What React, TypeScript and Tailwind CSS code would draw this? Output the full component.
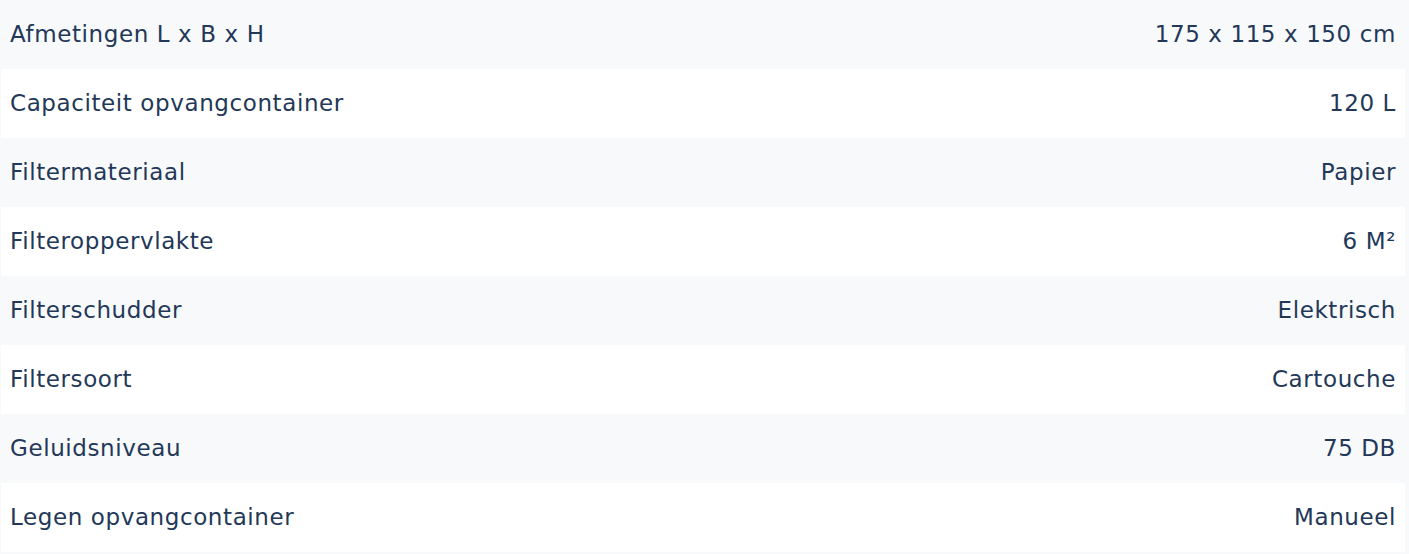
import React from "react";

const rows: [string, React.ReactNode][] = [
  ["Afmetingen L x B x H", "175 x 115 x 150 cm"],
  ["Capaciteit opvangcontainer", "120 L"],
  ["Filtermateriaal", "Papier"],
  ["Filteroppervlakte", "6 M²"],
  ["Filterschudder", "Elektrisch"],
  ["Filtersoort", "Cartouche"],
  ["Geluidsniveau", "75 DB"],
  ["Legen opvangcontainer", "Manueel"],
];

export default function App() {
  return (
    <div
      className="w-[1409px] bg-[#f8f9fb] pl-[1px] pr-[4px] pb-[2px] text-[#233858] text-[23px] tracking-[0.6px]"
      style={{ fontFamily: '"DejaVu Sans", sans-serif' }}
    >
      {rows.map(([k, v], i) => (
        <div
          key={i}
          className={`flex h-[69px] items-center justify-between pl-[9px] pr-[9px] ${i % 2 === 1 ? "bg-white" : ""}`}
        >
          <span>{k}</span>
          <span>{v}</span>
        </div>
      ))}
    </div>
  );
}
